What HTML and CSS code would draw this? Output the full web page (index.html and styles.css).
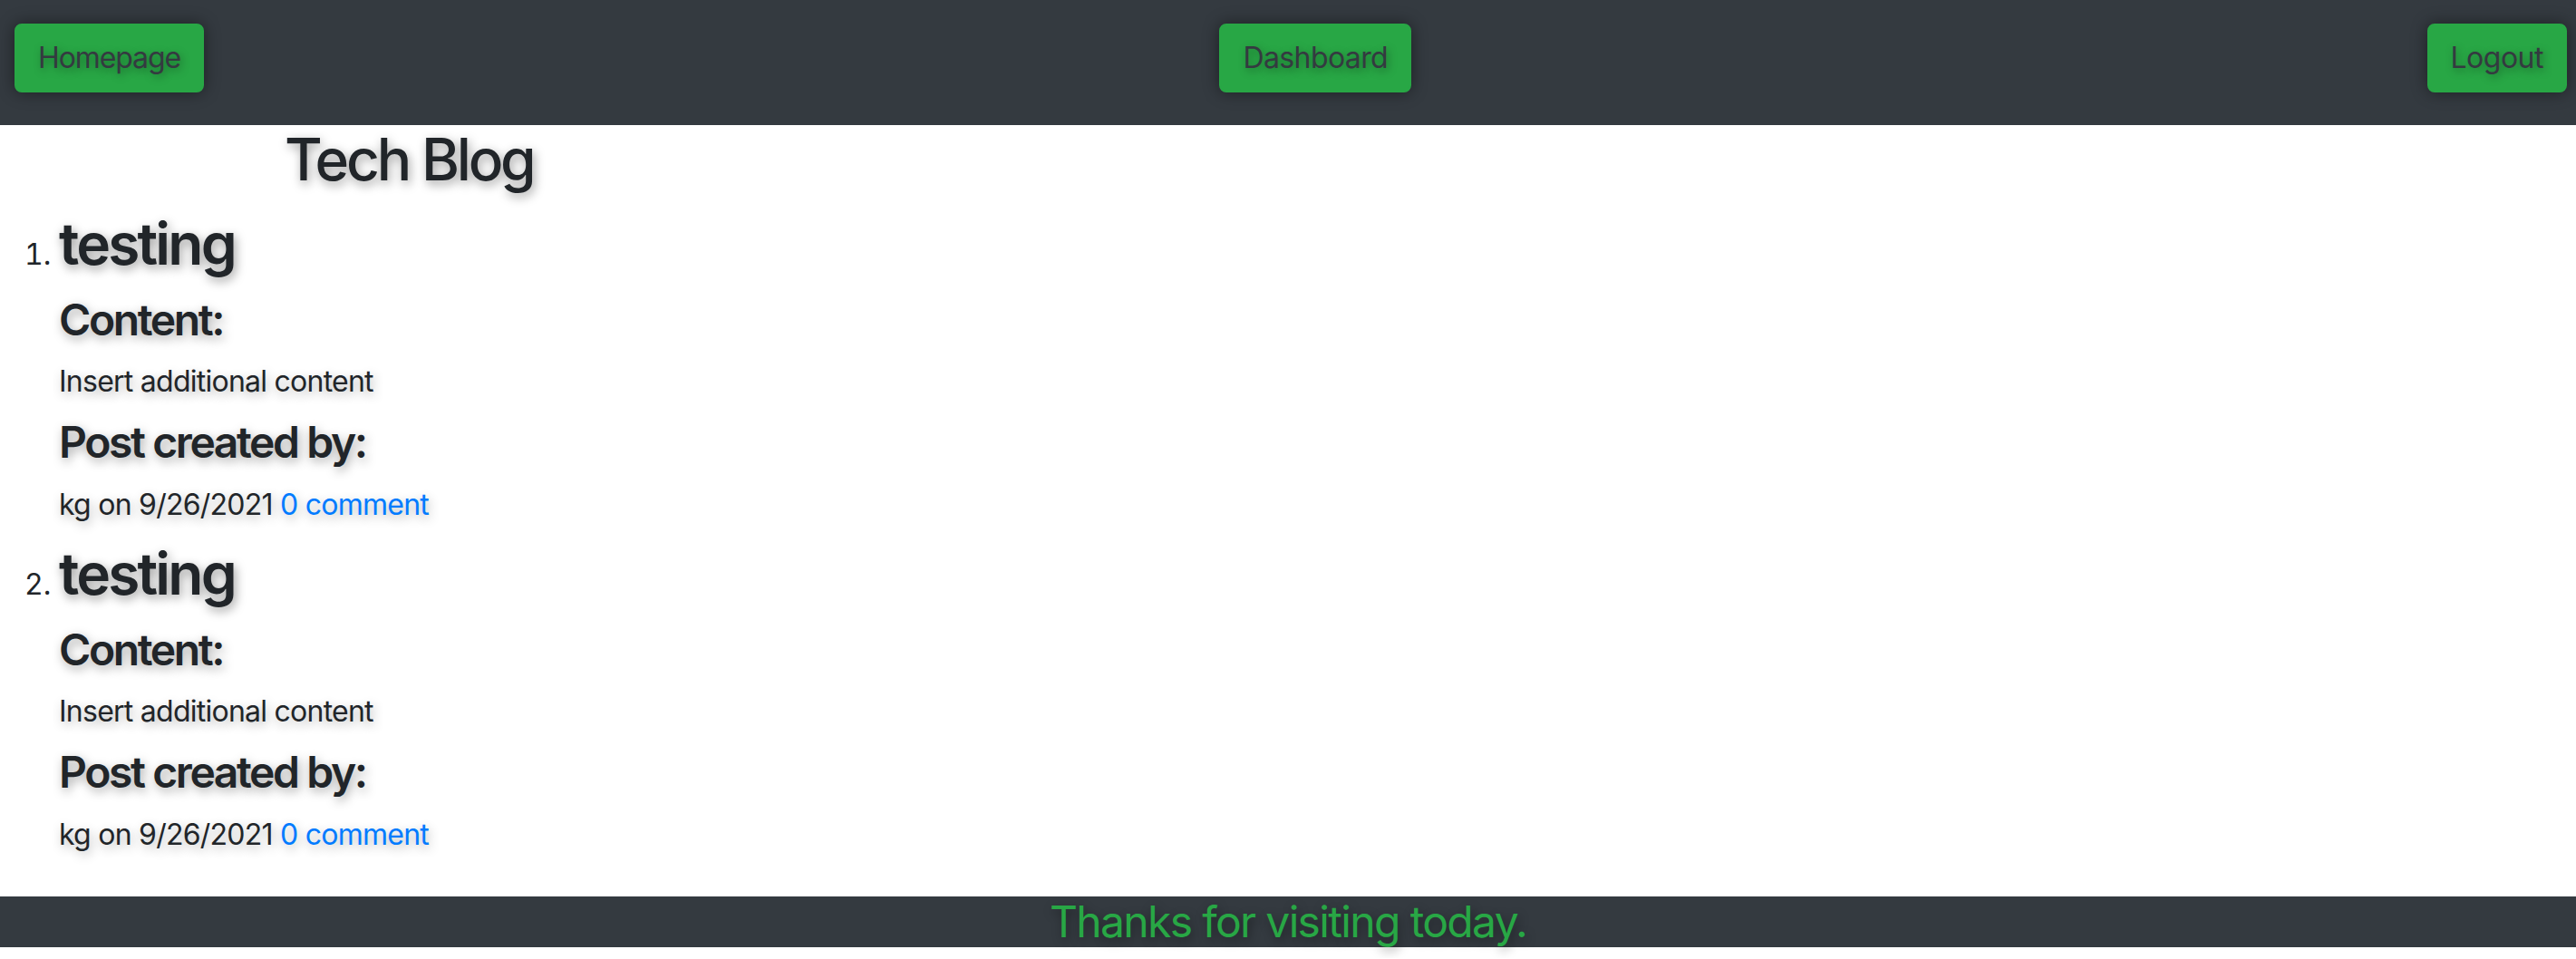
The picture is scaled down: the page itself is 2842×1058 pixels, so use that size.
FILE: index.html
```html
<!DOCTYPE html>
<html lang="en">
<head>
<meta charset="utf-8">
<title>Tech Blog</title>
<link rel="stylesheet" href="styles.css">
</head>
<body>
<header class="topbar">
  <a class="btn btn-home" href="#">Homepage</a>
  <a class="btn btn-dash" href="#">Dashboard</a>
  <a class="btn btn-out" href="#">Logout</a>
</header>
<main class="content">
  <h2 class="site-title">Tech Blog</h2>
  <ol class="posts">
    <li class="post">
      <h2 class="post-title">testing</h2>
      <h4 class="post-label">Content:</h4>
      <p class="post-text">Insert additional content</p>
      <h4 class="post-label">Post created by:</h4>
      <p class="post-text">kg on 9/26/2021 <a class="post-link" href="#">0 comment</a></p>
    </li>
    <li class="post">
      <h2 class="post-title">testing</h2>
      <h4 class="post-label">Content:</h4>
      <p class="post-text">Insert additional content</p>
      <h4 class="post-label">Post created by:</h4>
      <p class="post-text">kg on 9/26/2021 <a class="post-link" href="#">0 comment</a></p>
    </li>
  </ol>
</main>
<footer class="site-footer">
  <h4 class="footer-text">Thanks for visiting today.</h4>
</footer>
</body>
</html>
```
FILE: styles.css
```css
* { box-sizing: border-box; }
html, body { margin: 0; padding: 0; }
body {
  font-family: Inter, "Noto Sans", "Liberation Sans", sans-serif;
  font-size: 32px;
  line-height: 1.5;
  color: #212529;
  background: #ffffff;
  padding-bottom: 12px;
}
.topbar {
  height: 138px;
  background: #343a40;
  display: flex;
  justify-content: space-between;
  align-items: flex-start;
  padding: 26px 10px 0 16px;
}
.btn {
  display: inline-block;
  background: #28a745;
  border: 2px solid #28a745;
  border-radius: 8px;
  padding: 12px 24px;
  font-size: 32px;
  line-height: 48px;
  color: #343a40;
  text-decoration: none;
  box-shadow: 0 0 18px rgba(0, 0, 0, 0.45);
  text-shadow: 2px 3px 10px rgba(0, 0, 0, 0.35);
}
.btn-home { letter-spacing: -1.1px; }
.btn-dash { letter-spacing: -0.6px; }
.btn-out { letter-spacing: -0.5px; }
.content { padding: 0; }
.site-title {
  margin: 0 0 16px 0;
  padding-left: 314px;
  font-size: 64px;
  line-height: 76.8px;
  font-weight: 500;
  letter-spacing: -3.2px;
  text-shadow: 2px 4px 12px rgba(0, 0, 0, 0.4);
}
.posts {
  margin: 0 0 44px 0;
  padding-left: 65px;
}
.post::marker { font-size: 32px; }
.post-title {
  margin: 0 0 16px 0;
  font-size: 64px;
  line-height: 76.8px;
  font-weight: 600;
  letter-spacing: -2.8px;
  text-shadow: 2px 4px 12px rgba(0, 0, 0, 0.4);
}
.post-label {
  margin: 0 0 16px 0;
  font-size: 48px;
  line-height: 57.6px;
  font-weight: 600;
  letter-spacing: -2.4px;
  text-shadow: 2px 4px 12px rgba(0, 0, 0, 0.35);
}
.post-text {
  margin: 0 0 14px 0;
  font-size: 32px;
  line-height: 48px;
  letter-spacing: -0.75px;
  text-shadow: 2px 4px 12px rgba(0, 0, 0, 0.3);
}
.post-link { color: #007bff; text-decoration: none; }
.site-footer {
  height: 56px;
  background: #343a40;
  text-align: center;
  overflow: visible;
}
.footer-text {
  margin: 0;
  font-size: 48px;
  line-height: 56px;
  font-weight: 400;
  letter-spacing: -1.65px;
  color: #28a745;
  text-shadow: 2px 4px 12px rgba(0, 0, 0, 0.4);
}
```
